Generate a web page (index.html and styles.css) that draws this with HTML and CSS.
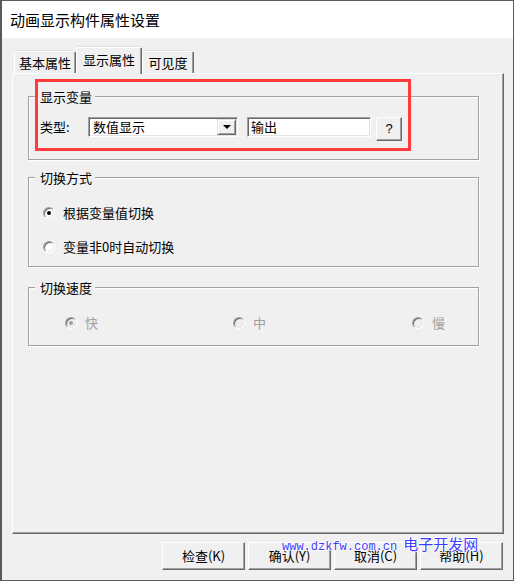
FILE: index.html
```html
<!DOCTYPE html>
<html lang="zh-CN">
<head>
<meta charset="utf-8">
<title>动画显示构件属性设置</title>
<link rel="stylesheet" href="styles.css">
</head>
<body>
<div class="window">
  <div class="titlebar">动画显示构件属性设置</div>
  <div class="content">
    <div class="tabs">
      <div class="tab t1">基本属性</div>
      <div class="tab active">显示属性</div>
      <div class="tab t3">可见度</div>
    </div>
    <div class="panel">
      <div class="highlight"></div>
      <div class="group g1">
        <span class="legend">显示变量</span>
        <div class="row">
          <span class="label">类型:</span>
          <div class="combo">
            <span class="combo-text">数值显示</span>
            <span class="combo-btn"><span class="arrow"></span></span>
          </div>
          <div class="field">输出</div>
          <div class="qbtn">?</div>
        </div>
      </div>
      <div class="group g2">
        <span class="legend">切换方式</span>
        <div class="opt"><span class="radio checked"></span><span>根据变量值切换</span></div>
        <div class="opt second"><span class="radio"></span><span>变量非0时自动切换</span></div>
      </div>
      <div class="group g3">
        <span class="legend">切换速度</span>
        <div class="speeds">
          <div class="opt disabled"><span class="radio checked"></span><span>快</span></div>
          <div class="opt disabled"><span class="radio"></span><span>中</span></div>
          <div class="opt disabled"><span class="radio"></span><span>慢</span></div>
        </div>
      </div>
    </div>
    <div class="buttons">
      <div class="btn">检查(K)</div>
      <div class="btn">确认(Y)</div>
      <div class="btn">取消(C)</div>
      <div class="btn">帮助(H)</div>
    </div>
  </div>
  <div class="watermark"><span class="wm-url">www.dzkfw.com.cn</span><span class="wm-name">电子开发网</span></div>
</div>
</body>
</html>
```
FILE: styles.css
```css
* { box-sizing: border-box; }
html, body { margin: 0; padding: 0; background: #f0f0f0; }
body {
  font-family: "Noto Sans CJK SC", "Noto Sans", sans-serif;
  font-size: 13px;
  color: #000;
}
.window {
  position: relative;
  width: 514px;
  height: 581px;
  border: 1px solid #5a5a5a;
  border-left: 2px solid #5a5a5a;
  display: flex;
  flex-direction: column;
  background: #f0f0f0;
}
.titlebar {
  height: 37px;
  background: #fff;
  font-size: 15px;
  line-height: 37px;
  padding-left: 8px;
  flex: none;
}
.content {
  flex: 1;
  padding: 9px 9px 0 10px;
  display: flex;
  flex-direction: column;
}
.tabs {
  display: flex;
  align-items: flex-end;
  height: 26px;
  padding-left: 2px;
  position: relative;
  z-index: 2;
}
.tab {
  height: 22px;
  line-height: 21px;
  text-align: center;
  background: #f0f0f0;
  border-top: 1px solid #fff;
  border-left: 1px solid #fff;
  border-right: 1px solid #696969;
  box-shadow: inset -1px 0 0 #a0a0a0, 0 -1px 0 #e3e3e3;
  border-top-left-radius: 2px;
  border-top-right-radius: 2px;
}
.t1 { width: 62px; }
.t3 { width: 52px; }
.tab.active {
  width: 66px;
  height: 27px;
  margin-bottom: -1px;
  line-height: 24px;
}
.panel {
  position: relative;
  height: 461px;
  border-top: 1px solid #fff;
  border-left: 1px solid #fff;
  border-right: 1px solid #696969;
  border-bottom: 1px solid #696969;
  box-shadow: inset -1px -1px 0 #a0a0a0;
  padding: 0 0 0 15px;
}
.highlight {
  position: absolute;
  left: 22px;
  top: 5px;
  width: 376px;
  height: 72px;
  border: 3px solid #ff3b3b;
  z-index: 3;
  pointer-events: none;
}
.group {
  position: relative;
  width: 451px;
  border: 1px solid #a0a0a0;
  box-shadow: 1px 1px 0 #fff, inset 1px 1px 0 #fff;
}
.legend {
  position: absolute;
  left: 6px;
  top: -9px;
  line-height: 17px;
  padding: 0 3px 0 5px;
  background: #f0f0f0;
}
.g1 { margin-top: 22px; height: 64px; padding: 20px 0 0 11px; }
.g2 { margin-top: 17px; height: 90px; padding: 26px 0 0 14px; }
.g3 { margin-top: 20px; height: 59px; padding: 26px 0 0 36px; }
.row {
  display: flex;
  align-items: flex-start;
}
.label {
  width: 48px;
  line-height: 20px;
}
.combo {
  width: 150px;
  height: 20px;
  background: #fff;
  border-top: 1px solid #a0a0a0;
  border-left: 1px solid #a0a0a0;
  border-right: 1px solid #fff;
  border-bottom: 1px solid #fff;
  box-shadow: inset 1px 1px 0 #696969, inset -1px -1px 0 #e3e3e3;
  display: flex;
  align-items: center;
  padding: 1px;
}
.combo-text {
  flex: 1;
  padding-left: 3px;
  line-height: 16px;
}
.combo-btn {
  width: 19px;
  height: 16px;
  background: #f0f0f0;
  border-top: 1px solid #e3e3e3;
  border-left: 1px solid #e3e3e3;
  border-right: 1px solid #696969;
  border-bottom: 1px solid #696969;
  box-shadow: inset 1px 1px 0 #fff, inset -1px -1px 0 #a0a0a0;
  display: flex;
  align-items: center;
  justify-content: center;
}
.arrow {
  width: 0;
  height: 0;
  border-left: 4px solid transparent;
  border-right: 4px solid transparent;
  border-top: 4px solid #000;
}
.field {
  margin-left: 9px;
  width: 124px;
  height: 20px;
  background: #fff;
  border-top: 1px solid #a0a0a0;
  border-left: 1px solid #a0a0a0;
  border-right: 1px solid #fff;
  border-bottom: 1px solid #fff;
  box-shadow: inset 1px 1px 0 #696969, inset -1px -1px 0 #e3e3e3;
  padding-left: 3px;
  line-height: 17px;
}
.qbtn {
  margin-left: 5px;
  width: 26px;
  height: 24px;
  background: #f0f0f0;
  border-top: 1px solid #fff;
  border-left: 1px solid #fff;
  border-right: 1px solid #696969;
  border-bottom: 1px solid #696969;
  box-shadow: inset -1px -1px 0 #a0a0a0;
  text-align: center;
  line-height: 21px;
  font-family: "Liberation Sans", sans-serif;
  font-size: 13px;
}
.opt {
  display: flex;
  align-items: center;
  height: 17px;
}
.opt.second { margin-top: 17px; }
.radio {
  position: relative;
  width: 12px;
  height: 12px;
  border-radius: 50%;
  border: 1px solid;
  border-color: #a0a0a0 #fff #fff #a0a0a0;
  box-shadow: inset 1px 1px 0 #696969, inset -1px -1px 0 #e3e3e3;
  background: #fff;
  margin-right: 8px;
  flex: none;
}
.radio.checked::after {
  content: "";
  position: absolute;
  left: 3px;
  top: 3px;
  width: 4px;
  height: 4px;
  border-radius: 50%;
  background: #000;
}
.speeds {
  display: grid;
  grid-template-columns: 168px 179px auto;
}
.opt.disabled { color: #a0a0a0; }
.opt.disabled .radio { background: #f0f0f0; }
.opt.disabled .radio.checked::after { background: #a0a0a0; }
.buttons {
  display: flex;
  justify-content: flex-end;
  gap: 3px;
  margin-top: 8px;
  padding-right: 1px;
}
.btn {
  width: 83px;
  height: 28px;
  background: #f0f0f0;
  border-top: 1px solid #fff;
  border-left: 1px solid #fff;
  border-right: 1px solid #696969;
  border-bottom: 1px solid #696969;
  box-shadow: inset -1px -1px 0 #a0a0a0;
  text-align: center;
  line-height: 25px;
}
.watermark {
  position: absolute;
  left: 280px;
  top: 532px;
  display: flex;
  align-items: baseline;
  color: #3c3cff;
  text-shadow: 1px 0 0 #fff, -1px 0 0 #fff, 0 1px 0 #fff, 0 -1px 0 #fff;
  z-index: 5;
}
.wm-url {
  font-family: "Liberation Mono", monospace;
  font-size: 12px;
  margin-right: 6px;
}
.wm-name {
  font-size: 15px;
}
```
